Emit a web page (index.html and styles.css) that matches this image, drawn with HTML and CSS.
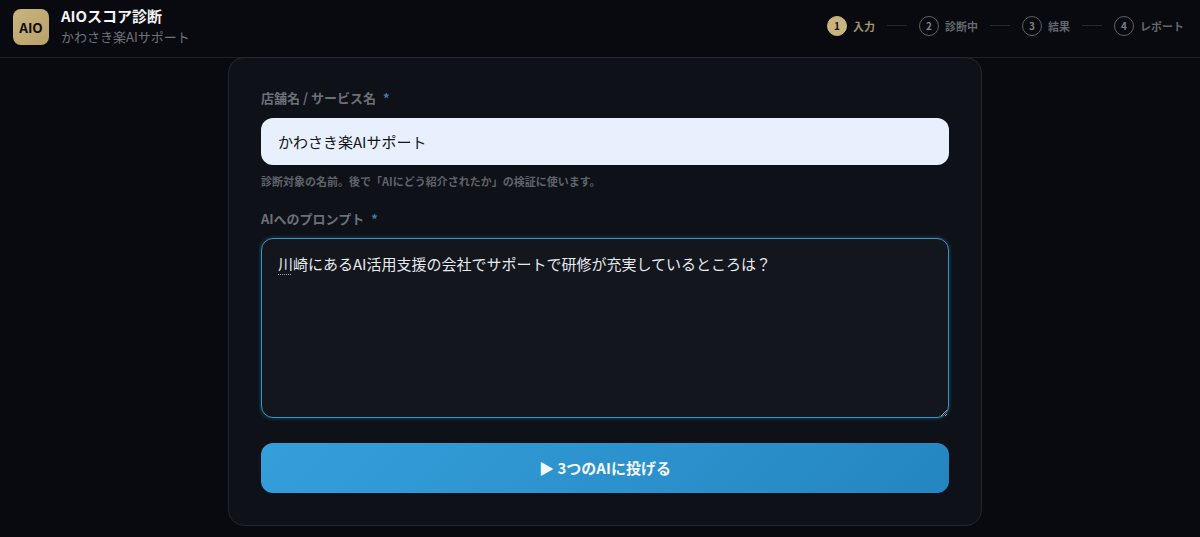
FILE: index.html
```html
<!DOCTYPE html>
<html lang="ja">
<head>
<meta charset="utf-8">
<title>AIOスコア診断</title>
<link rel="stylesheet" href="styles.css">
</head>
<body>
<header class="topbar">
  <div class="brand">
    <div class="logo">AIO</div>
    <div class="brand-text">
      <div class="brand-title">AIOスコア診断</div>
      <div class="brand-sub">かわさき楽AIサポート</div>
    </div>
  </div>
  <ol class="steps">
    <li class="step active"><span class="num">1</span><span class="step-label">入力</span></li>
    <li class="sep"></li>
    <li class="step"><span class="num">2</span><span class="step-label">診断中</span></li>
    <li class="sep"></li>
    <li class="step"><span class="num">3</span><span class="step-label">結果</span></li>
    <li class="sep"></li>
    <li class="step"><span class="num">4</span><span class="step-label">レポート</span></li>
  </ol>
</header>
<main class="page">
  <form class="card">
    <label class="label" for="name">店舗名 / サービス名 <span class="req">*</span></label>
    <input class="input" id="name" type="text" value="かわさき楽AIサポート" spellcheck="false">
    <p class="hint">診断対象の名前。後で「AIにどう紹介されたか」の検証に使います。</p>
    <label class="label label-second" for="prompt">AIへのプロンプト <span class="req">*</span></label>
    <div class="area-wrap">
      <textarea class="area" id="prompt" spellcheck="false">川崎にあるAI活用支援の会社でサポートで研修が充実しているところは？</textarea>
      <span class="spell"></span>
    </div>
    <button class="submit" type="button">▶ 3つのAIに投げる</button>
  </form>
</main>
</body>
</html>
```
FILE: styles.css
```css
* { box-sizing: border-box; }
html, body { margin: 0; height: 100%; }
body {
  background: #090a0f;
  color: #e8eaf0;
  font-family: "Noto Sans CJK JP", "Noto Sans", sans-serif;
  overflow: hidden;
}
.topbar {
  height: 58px;
  display: flex;
  align-items: center;
  justify-content: space-between;
  padding: 0 16px 4px 13px;
  background: #090a0f;
  border-bottom: 1px solid #1e2025;
}
.brand { display: flex; align-items: center; gap: 12px; }
.logo {
  width: 36px;
  height: 36px;
  border-radius: 8px;
  background: linear-gradient(135deg, #c9b37e, #b9a26a);
  color: #0c0c10;
  font-size: 13.5px;
  font-weight: 700;
  display: flex;
  align-items: center;
  justify-content: center;
}
.brand-text { display: flex; flex-direction: column; gap: 3px; }
.brand-title { font-size: 15px; line-height: 18px; font-weight: 700; color: #f3f4f6; }
.brand-sub { font-size: 13px; line-height: 18px; color: #6f737b; }
.steps { list-style: none; display: flex; align-items: center; gap: 12px; margin: 0 0 2px; padding: 0; }
.step { display: flex; align-items: center; gap: 6px; }
.num {
  width: 20px;
  height: 20px;
  border-radius: 50%;
  border: 1px solid #5c6068;
  color: #7b7f87;
  font-size: 10px;
  font-weight: 700;
  display: flex;
  align-items: center;
  justify-content: center;
}
.step-label { font-size: 11px; font-weight: 700; color: #63676e; }
.step.active .num { background: #c9b37e; border-color: #c9b37e; color: #16140e; }
.step.active .step-label { color: #a09673; }
.sep { width: 20px; height: 1px; background: #24262b; }
.page { display: flex; justify-content: center; padding-left: 10px; }
.card {
  width: 754px;
  margin-top: -1px;
  padding: 30px 32px 32px;
  background: #0e1117;
  border: 1px solid #24272d;
  border-radius: 16px;
  display: flex;
  flex-direction: column;
  align-items: stretch;
}
.label { font-size: 13px; line-height: 20px; font-weight: 700; color: #6c7078; margin-bottom: 10px; }
.label-second { margin-bottom: 9px; }
.req { color: #3a7fae; margin-left: 4px; }
.input {
  height: 47px;
  padding: 0 17px;
  border: 0;
  border-radius: 12px;
  background: #e9f0fd;
  color: #14161a;
  font: 400 15px "Noto Sans CJK JP", sans-serif;
  outline: none;
}
.hint { margin: 8px 0 20px; font-size: 11px; line-height: 16px; font-weight: 700; color: #5f636a; }
.area-wrap { position: relative; display: flex; }
.area {
  width: 100%;
  height: 180px;
  padding: 13px 16px;
  background: #13161d;
  border: 1px solid #3496c6;
  border-radius: 12px;
  color: #e8eaf0;
  font: 400 15px/24px "Noto Sans CJK JP", sans-serif;
  outline: none;
  box-shadow: 0 0 4px rgba(47, 147, 196, .45);
  resize: vertical;
}
.spell {
  position: absolute;
  left: 17px;
  top: 36px;
  width: 13px;
  border-bottom: 1px dotted #9aa0a8;
}
.submit {
  height: 50px;
  margin-top: 25px;
  padding: 0 0 2px;
  border: 0;
  border-radius: 12px;
  background: linear-gradient(135deg, #359fdb, #2486c0);
  color: #f4f8fb;
  font: 700 15px "Noto Sans CJK JP", sans-serif;
}
```
